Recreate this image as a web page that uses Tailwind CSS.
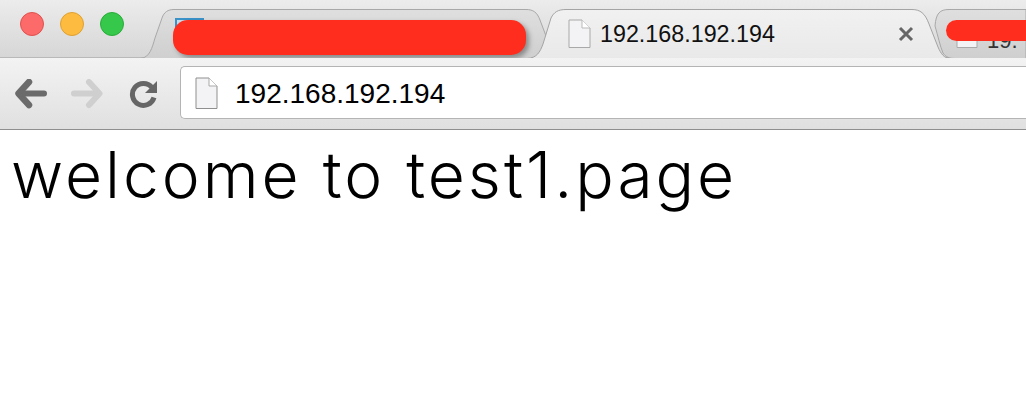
<!DOCTYPE html>
<html lang="en">
<head>
    <meta charset="UTF-8">
    <title>192.168.192.194</title>
    <script src="https://cdn.jsdelivr.net/npm/@tailwindcss/browser@4"></script>
</head>
<body class="bg-white overflow-hidden font-['Liberation_Sans',Arial,sans-serif]">
    <div class="w-[1026px] h-[408px] overflow-hidden">
        <!-- tab strip -->
        <div class="relative h-[58px] bg-gradient-to-b from-[#ececec] to-[#d6d6d6] flex items-start overflow-hidden">
            <svg class="absolute left-0 top-0" width="1026" height="59" viewBox="0 0 1026 59" fill="none">
                <defs>
                    <linearGradient id="inactive" x1="0" y1="0" x2="0" y2="1">
                        <stop offset="0" stop-color="#dfdfdf"/>
                        <stop offset="1" stop-color="#cfcfcf"/>
                    </linearGradient>
                    <linearGradient id="active" x1="0" y1="0" x2="0" y2="1">
                        <stop offset="0" stop-color="#f1f1f1"/>
                        <stop offset="1" stop-color="#e9e9e9"/>
                    </linearGradient>
                </defs>
                <line x1="0" y1="58" x2="1026" y2="58" stroke="#9c9c9c"/>
                <path d="M141 58.5C150 57 152 48 155 38L162 18C164 12 168 9.500 174 9.500H526C533 9.500 537 12 540 20L549 44C547 52 543 58 534 58.5Z" fill="url(#inactive)" stroke="#a8a8a8"/>
                <path d="M1026 9.500H949C940 9.500 936 13 935 26C938 36 940 46 943 53C946 57 949 58.5 955 58.5H1026Z" fill="url(#inactive)" stroke="#a8a8a8"/>
                <path d="M527 59C537 58 540 52 543 44L551 18C554 12 558 9.500 566 9.500H912C920 9.500 925 13 929 24L938 47C941 54 944 58 950 59Z" fill="url(#active)"/>
                <path d="M527 58.5C537 58 540 52 543 44L551 18C554 12 558 9.500 566 9.500H912C920 9.500 925 13 929 24L938 47C941 54 944 58 950 58.5" stroke="#a4a4a4"/>
            </svg>

            <!-- window controls -->
            <div class="relative flex gap-4 pl-5 pt-3 w-[175px] shrink-0">
                <span class="w-6 h-6 rounded-full bg-[#fc6a6a] border border-[#e0504f]"></span>
                <span class="w-6 h-6 rounded-full bg-[#fdbc40] border border-[#dfa030]"></span>
                <span class="w-6 h-6 rounded-full bg-[#35c84a] border border-[#2aab3a]"></span>
            </div>

            <!-- redacted tab -->
            <div class="relative w-[393px] shrink-0 h-full">
                <span class="absolute left-0 top-[18px] w-[29px] h-[14px] border-2 border-[#3a92c8] bg-[#c9dcea]"></span>
                <span class="absolute left-[-2px] top-[20px] w-[353px] h-[35px] rounded-[15px] bg-[#ff2d1e] shadow-[3px_3px_5px_rgba(0,0,0,0.35)]"></span>
            </div>

            <!-- active tab -->
            <div class="relative flex items-center w-[352px] shrink-0 h-[50px] mt-[9px]">
                <svg width="23" height="30" viewBox="0 0 23 30" class="shrink-0">
                    <path d="M1 1H14L22 9V28.500H1Z" fill="#f3f3f5" stroke="#a9a9a9"/>
                    <path d="M14 1V9H22" fill="#fff" stroke="#b9b9b9"/>
                </svg>
                <span class="ml-[9px] mt-[1px] text-[23.3px] leading-none text-[#111]">192.168.192.194</span>
                <svg width="16" height="16" viewBox="0 0 16 16" class="ml-auto mr-[6px]">
                    <path d="M2 2L14 14M14 2L2 14" stroke="#666" stroke-width="3"/>
                </svg>
            </div>

            <!-- third tab -->
            <div class="relative flex-1 h-full">
                <svg width="22" height="10" viewBox="0 0 22 10" class="absolute left-[36px] top-[38px]">
                    <path d="M1 0V9.500H21V0" fill="#f3f3f5" stroke="#a9a9a9"/>
                </svg>
                <span class="absolute left-[67px] top-[30px] text-[22px] leading-none text-[#333]">19.</span>
                <span class="absolute left-[26px] top-[20px] w-[100px] h-[21px] rounded-[11px] bg-[#ff2d1e]"></span>
            </div>
        </div>

        <!-- toolbar -->
        <div class="h-[72px] bg-gradient-to-b from-[#f3f3f3] to-[#e0e0e0] border-b border-[#8f8f8f] flex items-start pt-[8px]">
            <div class="flex items-center w-[180px] h-[53px] shrink-0">
                <svg width="34" height="30" viewBox="0 0 34 30" class="ml-[15px] mt-[2px]" fill="none">
                    <path d="M14 3L3.500 14.500L14 26" stroke="#6b6b6b" stroke-width="6.500" stroke-linecap="round" stroke-linejoin="round"/>
                    <path d="M6 14.500H29" stroke="#6b6b6b" stroke-width="6" stroke-linecap="round"/>
                </svg>
                <svg width="34" height="30" viewBox="0 0 34 30" class="ml-[20px] mt-[2px]" fill="none">
                    <path d="M20 3L30.500 14.500L20 26" stroke="#cfcfcf" stroke-width="6" stroke-linecap="round" stroke-linejoin="round"/>
                    <path d="M28 14.500H5" stroke="#cfcfcf" stroke-width="6" stroke-linecap="round"/>
                </svg>
                <svg width="30" height="30" viewBox="0 0 30 30" class="ml-[26px] mt-[2px]" fill="none">
                    <path d="M23 8.500A11 11 0 1 0 25 18.500" stroke="#666" stroke-width="5"/>
                    <path d="M28 2V14H16Z" fill="#666"/>
                </svg>
            </div>
            <div class="flex-1 h-[53px] bg-white border border-[#b4b4b4] border-r-0 rounded-l-[5px] flex items-center pl-[14px]">
                <svg width="23" height="33" viewBox="0 0 23 33" class="shrink-0 mt-[2px]">
                    <path d="M1 1H14L22 9V31.500H1Z" fill="#f3f3f5" stroke="#8f8f8f"/>
                    <path d="M14 1V9H22" fill="#fff" stroke="#a9a9a9"/>
                </svg>
                <span class="ml-[17px] mt-[2px] text-[28px] leading-none text-black">192.168.192.194</span>
            </div>
        </div>

        <!-- page -->
        <div class="pl-[11px]">
            <p class="text-[64px] leading-[90px] tracking-[3px] text-black font-['Inter',sans-serif] font-light">welcome to test1.page</p>
        </div>
    </div>
</body>
</html>
